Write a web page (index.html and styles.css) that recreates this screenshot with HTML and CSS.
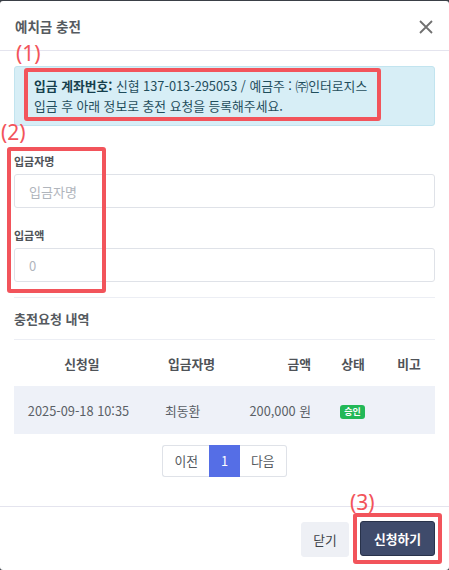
FILE: index.html
```html
<!DOCTYPE html>
<html lang="ko">
<head>
<meta charset="utf-8">
<title>예치금 충전</title>
<link rel="stylesheet" href="styles.css">
</head>
<body>
<div class="modal">
  <div class="modal-header">
    <h5 class="modal-title">예치금 충전</h5>
    <button class="btn-close" aria-label="닫기">
      <svg width="14" height="14" viewBox="0 0 14 14"><path d="M1 1L13 13M13 1L1 13" stroke="#707070" stroke-width="1.8" fill="none"/></svg>
    </button>
  </div>
  <div class="modal-body">
    <div class="alert">
      <div><b>입금 계좌번호:</b> 신협 137-013-295053 / 예금주 : ㈜인터로지스</div>
      <div>입금 후 아래 정보로 충전 요청을 등록해주세요.</div>
    </div>
    <div class="form-group">
      <label class="form-label">입금자명</label>
      <input class="form-control" type="text" placeholder="입금자명">
    </div>
    <div class="form-group second">
      <label class="form-label">입금액</label>
      <input class="form-control" type="text" placeholder="0">
    </div>
    <div class="divider"></div>
    <h6 class="section-title">충전요청 내역</h6>
    <table class="history">
      <colgroup>
        <col class="c1"><col class="c2"><col class="c3"><col class="c4"><col class="c5">
      </colgroup>
      <thead>
        <tr>
          <th class="t-center">신청일</th>
          <th class="t-left">입금자명</th>
          <th class="t-right">금액</th>
          <th class="t-center">상태</th>
          <th class="t-center">비고</th>
        </tr>
      </thead>
      <tbody>
        <tr>
          <td class="t-center date">2025-09-18 10:35</td>
          <td class="t-left name">최동환</td>
          <td class="t-right">200,000 원</td>
          <td class="t-center"><span class="badge">승인</span></td>
          <td></td>
        </tr>
      </tbody>
    </table>
    <div class="pager">
      <span class="page">이전</span>
      <span class="page active">1</span>
      <span class="page">다음</span>
    </div>
  </div>
  <div class="modal-footer">
    <button class="btn btn-light">닫기</button>
    <button class="btn btn-dark">신청하기</button>
  </div>

  <div class="anno-label a1">(1)</div>
  <div class="anno-box b1"></div>
  <div class="anno-label a2">(2)</div>
  <div class="anno-box b2"></div>
  <div class="anno-label a3">(3)</div>
  <div class="anno-box b3"></div>
</div>
</body>
</html>
```
FILE: styles.css
```css
html, body {
  margin: 0;
  padding: 0;
  background: #3a3f46;
}
body {
  font-family: "Noto Sans CJK KR", "Noto Sans", sans-serif;
  color: #495057;
  font-size: 13px;
}
.modal {
  position: relative;
  margin-top: 1px;
  height: 569px;
  background: #fff;
  border-radius: 3px;
  display: flex;
  flex-direction: column;
}
.modal-header {
  height: 49px;
  border-bottom: 1px solid #e4e4ee;
  display: flex;
  align-items: center;
  justify-content: space-between;
  padding: 0 15px;
}
.modal-title {
  margin: 0;
  font-size: 13.5px;
  font-weight: 700;
  color: #555a60;
  line-height: 1;
  margin-top: 2px;
}
.btn-close {
  border: 0;
  background: none;
  padding: 0;
  width: 14px;
  height: 14px;
  display: flex;
  margin-right: 1px;
  margin-top: 2px;
}
.modal-body {
  flex: 1;
  padding: 15px 14px 0;
}
.alert {
  background: #d7eef6;
  border: 1px solid #c2e4ef;
  border-radius: 3px;
  padding: 9px 19px 9px;
  color: #1f4d5c;
  font-size: 12.8px;
  line-height: 20px;
}
.alert b {
  font-weight: 700;
  color: #163f4d;
}
.form-group {
  margin-top: 27px;
}
.form-group.second {
  margin-top: 19px;
}
.form-label {
  display: block;
  font-size: 11px;
  font-weight: 700;
  color: #4f5358;
  line-height: 16px;
  margin-bottom: 5px;
}
.form-control {
  display: block;
  box-sizing: border-box;
  width: 100%;
  height: 34px;
  border: 1px solid #dfe2e8;
  border-radius: 3px;
  padding: 0 14px;
  font-family: inherit;
  font-size: 13px;
  color: #495057;
  outline: none;
}
.form-control::placeholder {
  color: #b0b5bc;
}
.divider {
  margin-top: 15px;
  border-top: 1px solid #eceef4;
}
.section-title {
  margin: 0;
  font-size: 13px;
  font-weight: 700;
  color: #555a60;
  line-height: 40px;
  border-bottom: 1px solid #eceef4;
  margin-top: 1px;
}
.history {
  width: 100%;
  border-collapse: collapse;
  font-size: 12.8px;
}
.c1 { width: 136px; }
.c2 { width: 80px; }
.c3 { width: 93px; }
.c4 { width: 60px; }
.c5 { width: 52px; }
.history th {
  height: 46px;
  font-weight: 700;
  color: #4f5358;
  padding: 0;
}
.history td {
  height: 48px;
  background: #eef1f8;
  padding: 0;
  color: #5a5f66;
}
.t-center { text-align: center; }
.t-left { text-align: left; padding-left: 18px !important; }
.t-right { text-align: right; padding-right: 12px !important; }
.history td.date { padding-right: 7px; }
.history td.name { padding-left: 15px !important; }
.badge {
  display: inline-block;
  background: #22b857;
  color: #fff;
  font-size: 9px;
  font-weight: 700;
  line-height: 14px;
  padding: 0 4px;
  border-radius: 3px;
  vertical-align: middle;
  margin-left: -1px;
}
.pager {
  display: flex;
  justify-content: center;
  margin-top: 11px;
}
.page {
  box-sizing: border-box;
  height: 32px;
  line-height: 30px;
  border: 1px solid #dfe2e8;
  padding: 0 11px;
  font-size: 12.8px;
  color: #555a60;
  background: #fff;
}
.page:first-child {
  border-radius: 3px 0 0 3px;
  border-right: 0;
}
.page:last-child {
  border-radius: 0 3px 3px 0;
  border-left: 0;
}
.page.active {
  background: #556ee6;
  border-color: #556ee6;
  color: #fff;
  width: 31px;
  padding: 0;
  text-align: center;
}
.modal-footer {
  height: 63px;
  border-top: 1px solid #e4e4ee;
  display: flex;
  justify-content: flex-end;
  align-items: center;
  padding: 0 14px;
  gap: 11px;
}
.btn {
  font-family: inherit;
  font-size: 12.8px;
  border-radius: 3px;
  height: 35px;
  padding: 0 14px;
  cursor: pointer;
}
.btn-light {
  background: #eef0f5;
  border: 1px solid #eef0f5;
  color: #3d4247;
  width: 48px;
  padding: 0;
  margin-top: 2px;
}
.btn-dark {
  background: #3f4b6b;
  border: 1px solid #28324a;
  color: #fff;
  font-weight: 700;
  width: 75px;
  padding: 0;
}
.anno-label {
  position: absolute;
  color: #f2545b;
  font-family: "Noto Sans", "Noto Sans CJK KR", sans-serif;
  font-size: 21px;
  line-height: 24px;
}
.a1 { left: 16px; top: 40px; }
.a2 { left: 1px; top: 119px; }
.a3 { left: 350px; top: 489px; }
.anno-box {
  position: absolute;
  box-sizing: border-box;
  border: 4px solid #f2545b;
  border-radius: 3px;
}
.b1 { left: 24px; top: 67px; width: 357px; height: 53px; }
.b2 { left: 7px; top: 146px; width: 99px; height: 146px; }
.b3 { left: 353px; top: 512px; width: 89px; height: 51px; }
```
